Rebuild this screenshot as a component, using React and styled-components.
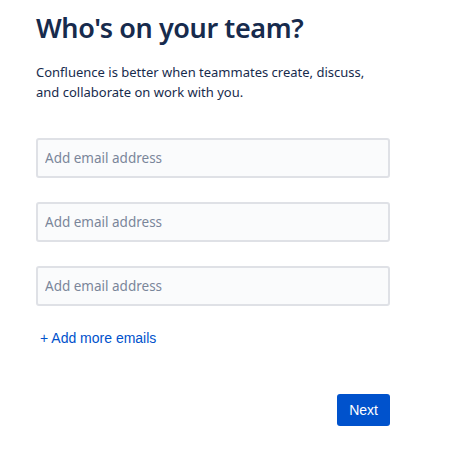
import React from 'react'
import styled, { createGlobalStyle } from 'styled-components'

const Global = createGlobalStyle`
	body {
		margin: 0;
		background: #fff;
		font-family: "Noto Sans", "Open Sans", sans-serif;
		color: #172B4D;
	}
`

const Page = styled.div`
	width: 354px;
	padding: 10px 0 0 36px;
`

const Title = styled.h1`
	margin: 0;
	font-size: 27px;
	line-height: 36px;
	font-weight: 600;
	color: #172B4D;
	letter-spacing: -0.4px;
`

const Intro = styled.p`
	margin: 16px 0 0;
	font-size: 13px;
	line-height: 20px;
	color: #172B4D;
`

const Fields = styled.div`
	display: flex;
	flex-direction: column;
	gap: 24px;
	margin-top: 36px;
`

const EmailInput = styled.input`
	box-sizing: border-box;
	width: 354px;
	height: 40px;
	padding: 0 7px;
	border: 2px solid #DFE1E6;
	border-radius: 3px;
	background: #FAFBFC;
	font-family: "Noto Sans", "Open Sans", sans-serif;
	font-size: 13.5px;
	color: #172B4D;
	outline: none;
	&::placeholder {
		color: #7A869A;
	}
`

const AddMore = styled.button`
	display: block;
	margin: 22px 0 0 4px;
	padding: 0;
	border: none;
	background: none;
	font-family: "Liberation Sans", Arial, sans-serif;
	font-size: 14px;
	line-height: 20px;
	color: #0052CC;
	cursor: pointer;
`

const Footer = styled.div`
	display: flex;
	justify-content: flex-end;
	margin-top: 46px;
`

const NextButton = styled.button`
	height: 32px;
	padding: 0 12px;
	border: none;
	border-radius: 3px;
	background: #0052CC;
	color: #fff;
	font-family: "Liberation Sans", Arial, sans-serif;
	font-size: 14px;
	cursor: pointer;
`

export default function App() {
	return (
		<>
			<Global />
			<Page>
				<Title>Who's on your team?</Title>
				<Intro>
					Confluence is better when teammates create, discuss,
					<br />
					and collaborate on work with you.
				</Intro>
				<Fields>
					<EmailInput placeholder="Add email address" />
					<EmailInput placeholder="Add email address" />
					<EmailInput placeholder="Add email address" />
				</Fields>
				<AddMore>+ Add more emails</AddMore>
				<Footer>
					<NextButton>Next</NextButton>
				</Footer>
			</Page>
		</>
	)
}
